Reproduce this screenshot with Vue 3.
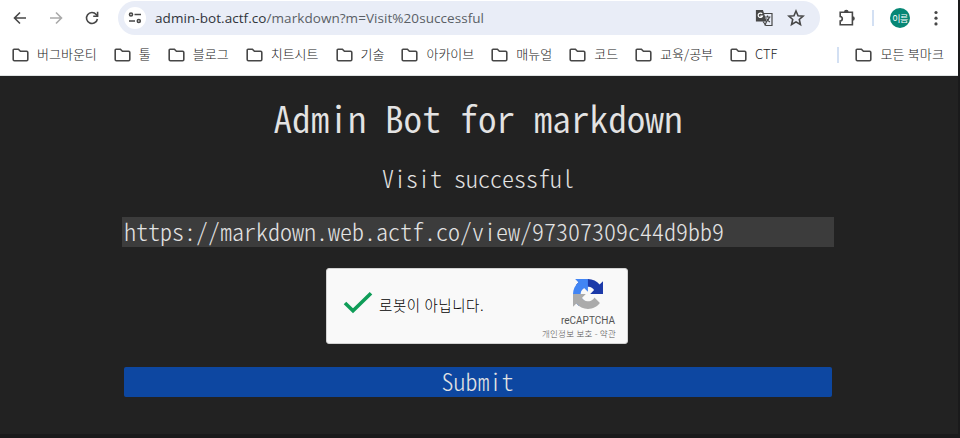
<script setup>
const bookmarks = ['버그바운티', '툴', '블로그', '치트시트', '기술', '아카이브', '매뉴얼', '코드', '교육/공부', 'CTF']
const folder = 'M2 1.2h4.4l2 2h6.2q1.2 0 1.2 1.2v7.200q0 1.200-1.200 1.200H2.400q-1.200 0-1.200-1.200V2q0-.8.8-.8z'
</script>

<template>
  <div class="screen">
    <div class="window">
      <header class="chrome">
        <div class="toolbar">
          <svg class="back" width="16" height="16" viewBox="0 0 16 16"><path d="M14 8H3M8 2.500L2.500 8 8 13.500" /></svg>
          <svg class="forward" width="16" height="16" viewBox="0 0 16 16"><path d="M2 8h11M8 2.500L13.500 8 8 13.500" /></svg>
          <svg class="reload" width="16" height="16" viewBox="0 0 16 16"><path d="M13.400 9a5.500 5.500 0 1 1-1.200-4.600L13.500 6" /><path d="M13.600 1.800V6.300H9.200" /></svg>
          <div class="omnibox">
            <span class="site">
              <svg width="14" height="12" viewBox="0 0 14 12"><circle cx="3" cy="2.500" r="1.500" /><path d="M6.500 2.500H13M1 9H7" /><circle cx="10.800" cy="9" r="1.500" /></svg>
            </span>
            <span class="address"><b>admin-bot.actf.co</b>/markdown?m=Visit%20successful</span>
            <svg class="translate" width="18" height="18" viewBox="0 0 18 18">
              <path class="sheet" d="M7.500 4.500h9.500v12h-6L8 12.500" />
              <path class="page" d="M1.500 1.500h6l3.300 10.500H1.500z" />
              <path class="g" d="M7.200 5A2.200 2.200 0 1 0 7.400 7.200H5.300" />
              <path class="sheet" d="M10 8h5.500M12.500 6.500V8M14.500 8q-.8 3-3.500 5M11.500 9.500q1.200 2.500 3.500 3.500M9.800 16.500l1.800-4" />
            </svg>
            <svg class="star" width="18" height="18" viewBox="0 0 18 18"><path d="M9 2l2.050 4.700 5.100.45-3.870 3.360 1.170 5L9 12.850 4.550 15.510l1.170-5L1.850 7.150l5.100-.45z" /></svg>
          </div>
          <svg class="puzzle" width="18" height="18" viewBox="0 0 18 18"><path d="M2.200 3.200H14.400V15.700H2.200v-3.600q2.100-.2 2.100-2.300T2.200 7.500z" /><path class="knob" d="M6 3a2.300 2.300 0 0 1 4.600 0zM14.500 7.200a2.300 2.300 0 0 1 0 4.600z" /></svg>
          <i class="rule"></i>
          <span class="avatar">이름</span>
          <svg class="more" width="4" height="16" viewBox="0 0 4 16"><circle cx="2" cy="2.500" r="1.600" /><circle cx="2" cy="8.200" r="1.600" /><circle cx="2" cy="13.900" r="1.600" /></svg>
        </div>
        <nav class="bookmarks">
          <span v-for="name in bookmarks" :key="name" class="bookmark">
            <svg width="17" height="14" viewBox="0 0 17 14"><path :d="folder" /></svg><span>{{ name }}</span>
          </span>
          <i class="rule all-rule"></i>
          <span class="bookmark all">
            <svg width="17" height="14" viewBox="0 0 17 14"><path :d="folder" /></svg><span>모든 북마크</span>
          </span>
        </nav>
      </header>
      <main>
        <h1>Admin Bot for markdown</h1>
        <p class="message">Visit successful</p>
        <div class="field">https://markdown.web.actf.co/view/97307309c44d9bb9</div>
        <section class="captcha">
          <svg class="check" width="30" height="24" viewBox="0 0 30 24"><path d="M2 12l8 7.800L28 2.200" /></svg>
          <span class="robot">로봇이 아닙니다.</span>
          <div class="brand">
            <svg width="30" height="30" viewBox="0 0 64 64">
              <path fill="#1c3aa9" d="M64 31.955l-.033-1.370V4.687l-7.160 7.160C50.948 4.674 42.033.093 32.050.093c-10.400 0-19.622 4.960-25.458 12.640l11.736 11.860a15.550 15.550 0 0 1 4.754-5.334c2.050-1.600 4.952-2.906 8.968-2.906.485 0 .86.057 1.135.163 4.976.393 9.288 3.140 11.828 7.124l-8.307 8.307L64 31.953" />
              <path fill="#4285f4" d="M31.862.094l-1.370.033H4.594l7.160 7.160C4.580 13.147 0 22.060 0 32.046c0 10.400 4.960 19.622 12.640 25.458L24.500 45.768a15.550 15.550 0 0 1-5.334-4.754c-1.600-2.050-2.906-4.952-2.906-8.968 0-.485.057-.86.163-1.135.393-4.976 3.140-9.288 7.124-11.828l8.307 8.307L31.860.095" />
              <path fill="#ababab" d="M.001 32.045l.033 1.370v25.898l7.160-7.160c5.860 7.173 14.774 11.754 24.760 11.754 10.400 0 19.622-4.960 25.458-12.640l-11.736-11.860a15.550 15.550 0 0 1-4.754 5.334c-2.050 1.600-4.952 2.906-8.968 2.906-.485 0-.86-.057-1.135-.163-4.976-.393-9.288-3.140-11.828-7.124l8.307-8.307c-10.522.04-22.400.066-27.295-.005" />
            </svg>
            <span class="name">reCAPTCHA</span>
            <span class="terms">개인정보 보호 - 약관</span>
          </div>
        </section>
        <button><span>Submit</span></button>
      </main>
    </div>
  </div>
</template>

<style>
body { background: #191919; overflow: hidden; }
</style>

<style scoped>
* { box-sizing: border-box; }
.screen { width: 960px; height: 438px; padding: 0 2px 4px 0; background: #1a1a1b; }
.window { height: 434px; background: #222; }
svg { flex: none; fill: none; stroke: #474747; stroke-width: 1.6; }
.chrome { height: 76px; background: #fff; border-bottom: 1px solid #dfe3e3; font-family: "Noto Sans", "Noto Sans CJK KR", sans-serif; }
.toolbar { display: flex; align-items: center; height: 36px; padding-left: 12px; }
.back { margin-right: 20px; }
.forward { margin-right: 20px; stroke: #aaa; }
.reload { margin-right: 18px; }
.omnibox { display: flex; align-items: center; width: 702px; height: 34px; padding: 0 15px 0 6px; border-radius: 17px; background: #e9edf7; }
.site { display: flex; align-items: center; justify-content: center; width: 22px; height: 22px; border-radius: 50%; background: #fff; }
.address { flex: 1; margin: -1px 0 0 9px; font: 400 13.500px "Open Sans", sans-serif; letter-spacing: .06px; color: #5a5f66; white-space: nowrap; }
.address b { font-weight: inherit; color: #30343a; }
.translate { margin-right: 14px; stroke-width: 1.2; }
.translate .page { fill: #474747; }
.translate .g { stroke: #fff; }
.puzzle { margin-left: 18px; }
.puzzle .knob { fill: #474747; stroke: none; }
.rule { flex: none; width: 2px; height: 16px; background: #d3e0f3; }
.toolbar .rule { margin: 0 16px 0 16px; }
.avatar { display: flex; align-items: center; justify-content: center; width: 20px; height: 20px; border-radius: 50%; background: #078775; color: #fff; font-size: 9px; letter-spacing: -.5px; white-space: nowrap; }
.more { margin-left: 24px; }
.more circle { fill: #474747; stroke: none; }
.bookmarks { display: flex; align-items: center; height: 38px; padding: 0 14px 0 12px; }
.bookmark { display: flex; align-items: center; gap: 8px; margin-right: 17px; font: 300 13px/18px "Noto Sans CJK KR", sans-serif; color: #222; white-space: nowrap; }
.bookmark > span { margin-bottom: 2px; }
.all-rule { margin-left: auto; margin-right: 16px; }
.all { margin-right: 0; }
.all > span { letter-spacing: .15px; }
main { display: flex; flex-direction: column; align-items: center; width: 712px; margin-left: 122px; font-family: "Noto Sans CJK KR", monospace; font-feature-settings: "hwid"; font-weight: 300; color: #e3e3e3; white-space: pre; }
h1 { margin: 19px 0 0; height: 44px; font-size: 37.200px; line-height: 44px; font-weight: 350; }
.message { margin: 24px 0 0; height: 30px; font-size: 24px; line-height: 30px; }
.field { width: 712px; height: 30px; margin-top: 24px; padding-left: 2px; background: #3c3c3c; font-size: 24px; line-height: 27px; }
.captcha { display: flex; align-items: center; width: 302px; height: 76px; margin: 21px 2px 0 0; padding: 0 11px 0 16px; border: 1px solid #d3d3d3; border-radius: 3px; background: #f9f9f9; font-feature-settings: normal; }
.check { margin-top: -6px; stroke: #0f9d58; stroke-width: 3.600; }
.robot { margin: -3px 0 0 6px; font-size: 14.500px; letter-spacing: .55px; color: #000; }
.brand { display: flex; flex-direction: column; align-items: flex-end; margin-left: auto; color: #555; }
.brand svg { margin: 6px 13px 4px 0; stroke: none; }
.name { margin-right: 1px; font: 10px/15px Roboto, sans-serif; }
.terms { font-size: 8.500px; line-height: 11px; letter-spacing: .25px; }
button { width: 708px; height: 30px; margin: 23px 0 0; padding: 0 1px 2px 0; border: 0; border-radius: 2px; background: #0d47a1; color: #e3e3e3; font: inherit; font-size: 24px; line-height: 28px; font-feature-settings: "hwid"; }
</style>
